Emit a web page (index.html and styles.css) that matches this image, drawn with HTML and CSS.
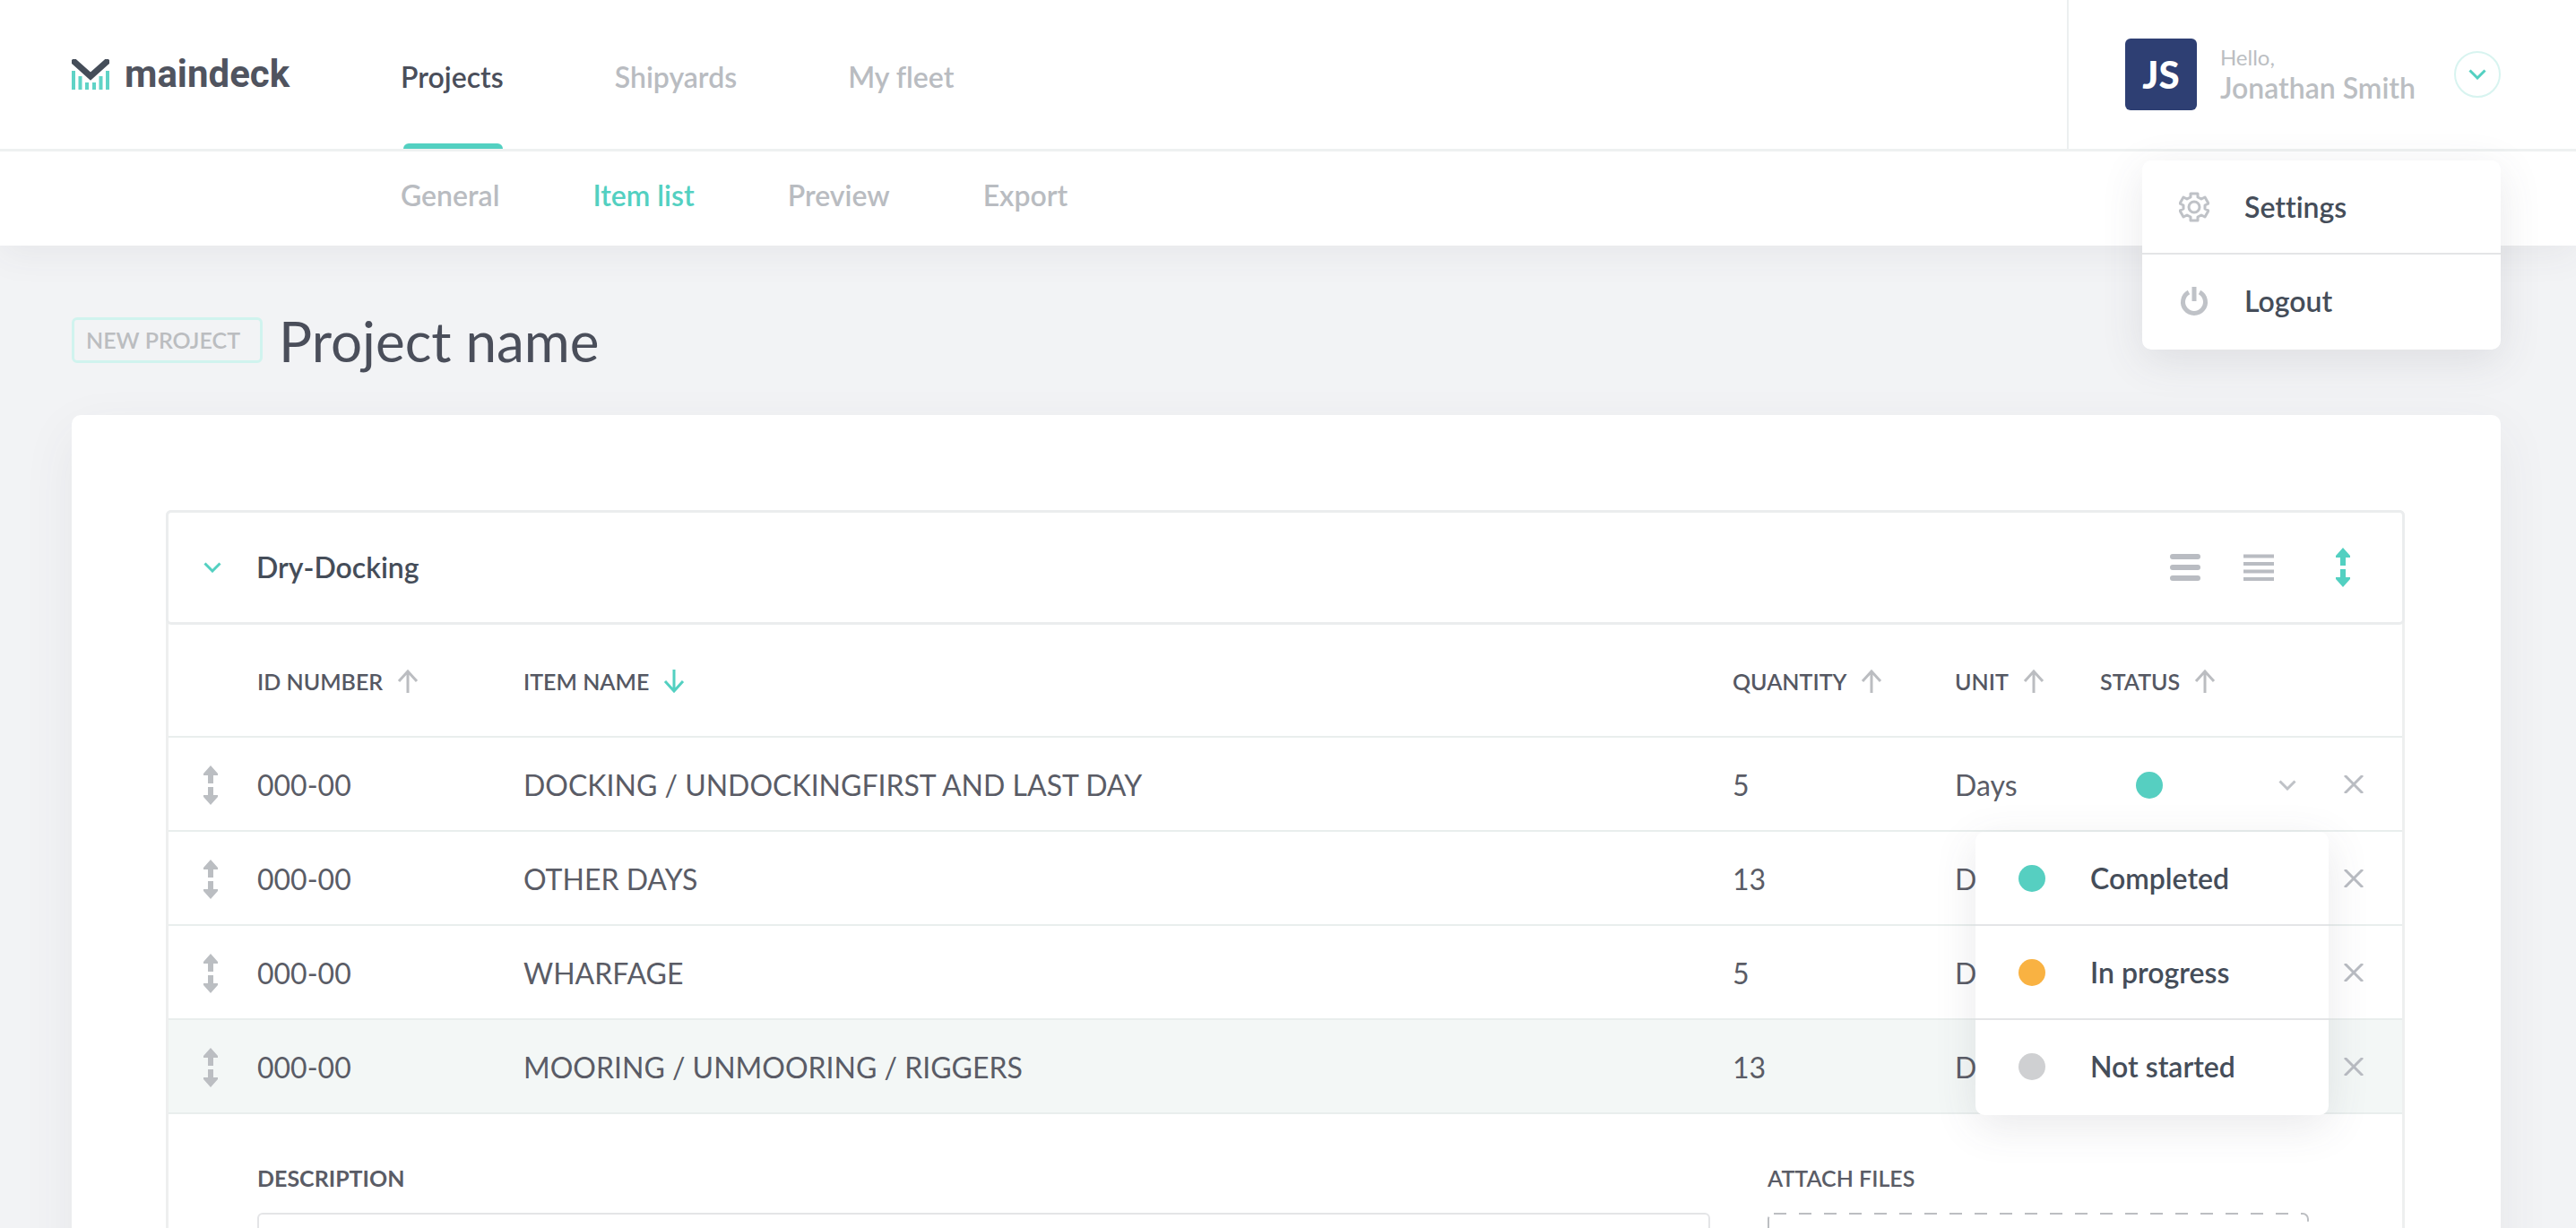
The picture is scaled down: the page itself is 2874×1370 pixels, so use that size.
FILE: index.html
```html
<!DOCTYPE html>
<html lang="en">
<head>
<meta charset="utf-8">
<title>Maindeck – Item list</title>
<link rel="stylesheet" href="styles.css">
</head>
<body>
<svg class="sprite" aria-hidden="true">
  <symbol id="chevron" viewBox="0 0 20 12"><path d="M1.500 1.500 10 10l8.500-8.500" fill="none" stroke="currentColor" stroke-width="3"/></symbol>
  <symbol id="arrow-up" viewBox="0 0 24 26"><path d="M12 26V2M2 13 12 2l10 11" fill="none" stroke="currentColor" stroke-width="3"/></symbol>
  <symbol id="arrow-down" viewBox="0 0 24 26"><path d="M12 0v24M2 13l10 11 10-11" fill="none" stroke="currentColor" stroke-width="3"/></symbol>
  <symbol id="move" viewBox="0 0 16 44"><path d="M8 0l8 9v2h-5v9H5v-9H0V9zM8 44l8-9v-2h-5v-9H5v9H0v2z" fill="currentColor"/></symbol>
  <symbol id="close" viewBox="0 0 22 20"><path d="M1 0l20 20M21 0 1 20" fill="none" stroke="currentColor" stroke-width="3"/></symbol>
</svg>

<header class="header">
  <div class="topbar">
    <a class="logo" href="#">
      <svg class="logo-mark" viewBox="0 0 42 34" aria-hidden="true">
        <path d="M2 13v21M9.500 19v15M17 26v8M25 26v8M32.500 19v15M40 13v21" stroke="#5fd3c6" stroke-width="4" fill="none"/>
        <path d="M3 3 21 19 39 3" fill="none" stroke="#454d59" stroke-width="7" stroke-linecap="round"/>
      </svg>
      <span>maindeck</span>
    </a>
    <nav class="nav" aria-label="Main">
      <a class="nav-link active" href="#">Projects</a>
      <a class="nav-link" href="#">Shipyards</a>
      <a class="nav-link" href="#">My fleet</a>
    </nav>
    <div class="user">
      <span class="avatar">JS</span>
      <p class="user-name"><small>Hello,</small>Jonathan Smith</p>
      <button class="user-toggle" type="button" aria-label="Account menu"><svg class="i-chevron"><use href="#chevron"/></svg></button>
      <ul class="menu user-menu">
        <li><a href="#"><svg class="menu-icon" viewBox="0 0 34 34"><g fill="none" stroke="currentColor" stroke-width="3"><path d="M13 2h8v4l4 2 4-2 4 7-4 2v4l4 2-4 7-4-2-4 2v4h-8v-4l-4-2-4 2-4-7 4-2v-4l-4-2 4-7 4 2 4-2z" stroke-linejoin="round"/><circle cx="17" cy="17" r="6"/></g></svg>Settings</a></li>
        <li><a href="#"><svg class="menu-icon" viewBox="0 0 34 34"><path d="M11 7a12.500 12.500 0 1 0 12 0M17 1v16" fill="none" stroke="currentColor" stroke-width="5"/></svg>Logout</a></li>
      </ul>
    </div>
  </div>
  <nav class="subnav" aria-label="Project">
    <a href="#">General</a>
    <a class="active" href="#">Item list</a>
    <a href="#">Preview</a>
    <a href="#">Export</a>
  </nav>
</header>

<main class="page">
  <div class="title">
    <span class="badge">NEW PROJECT</span>
    <h1>Project name</h1>
  </div>
  <section class="card">
    <div class="group">
      <div class="group-head">
        <button type="button" class="icon-btn teal" aria-label="Collapse"><svg class="i-chevron"><use href="#chevron"/></svg></button>
        <h2>Dry-Docking</h2>
        <button type="button" class="icon-btn" aria-label="Comfortable rows"><svg class="i-lines" viewBox="0 0 34 30"><path d="M3 3h28M3 15h28M3 27h28" stroke="currentColor" stroke-width="6" stroke-linecap="round"/></svg></button>
        <button type="button" class="icon-btn" aria-label="Compact rows"><svg class="i-lines" viewBox="0 0 34 30"><path d="M0 2.500h34M0 11h34M0 19.500h34M0 28h34" stroke="currentColor" stroke-width="4"/></svg></button>
        <button type="button" class="icon-btn teal sort-toggle" aria-label="Reorder"><svg class="i-move"><use href="#move"/></svg></button>
      </div>
      <table class="items">
        <colgroup><col class="c-move"><col class="c-id"><col><col class="c-qty"><col class="c-unit"><col class="c-status"><col class="c-close"></colgroup>
        <thead>
          <tr>
            <td></td>
            <th scope="col"><button type="button">ID NUMBER<svg><use href="#arrow-up"/></svg></button></th>
            <th scope="col"><button type="button" class="sorted">ITEM NAME<svg><use href="#arrow-down"/></svg></button></th>
            <th scope="col"><button type="button">QUANTITY<svg><use href="#arrow-up"/></svg></button></th>
            <th scope="col"><button type="button">UNIT<svg><use href="#arrow-up"/></svg></button></th>
            <th scope="col"><button type="button">STATUS<svg><use href="#arrow-up"/></svg></button></th>
            <td></td>
          </tr>
        </thead>
        <tbody>
          <tr>
            <td class="move"><svg class="i-move"><use href="#move"/></svg></td>
            <td>000-00</td><td>DOCKING / UNDOCKINGFIRST AND LAST DAY</td><td>5</td><td>Days</td>
            <td class="status">
              <button type="button" class="status-toggle" aria-label="Status: Completed"><span class="dot done"></span><svg class="i-chevron"><use href="#chevron"/></svg></button>
              <ul class="menu status-menu">
                <li><a href="#"><span class="dot done"></span>Completed</a></li>
                <li><a href="#"><span class="dot progress"></span>In progress</a></li>
                <li><a href="#"><span class="dot idle"></span>Not started</a></li>
              </ul>
            </td>
            <td class="remove"><button type="button" class="icon-btn" aria-label="Remove"><svg class="i-close"><use href="#close"/></svg></button></td>
          </tr>
          <tr>
            <td class="move"><svg class="i-move"><use href="#move"/></svg></td>
            <td>000-00</td><td>OTHER DAYS</td><td>13</td><td>Days</td><td></td>
            <td class="remove"><button type="button" class="icon-btn" aria-label="Remove"><svg class="i-close"><use href="#close"/></svg></button></td>
          </tr>
          <tr>
            <td class="move"><svg class="i-move"><use href="#move"/></svg></td>
            <td>000-00</td><td>WHARFAGE</td><td>5</td><td>Days</td><td></td>
            <td class="remove"><button type="button" class="icon-btn" aria-label="Remove"><svg class="i-close"><use href="#close"/></svg></button></td>
          </tr>
          <tr class="selected">
            <td class="move"><svg class="i-move"><use href="#move"/></svg></td>
            <td>000-00</td><td>MOORING / UNMOORING / RIGGERS</td><td>13</td><td>Days</td><td></td>
            <td class="remove"><button type="button" class="icon-btn" aria-label="Remove"><svg class="i-close"><use href="#close"/></svg></button></td>
          </tr>
        </tbody>
      </table>
      <div class="details">
        <div class="field">
          <label class="strong" for="description">DESCRIPTION</label>
          <textarea id="description"></textarea>
        </div>
        <div class="field">
          <label for="files">ATTACH FILES</label>
          <div class="drop">
            <svg aria-hidden="true"><rect x="1" y="1" width="100%" height="100%" rx="6"/></svg>
            <input id="files" type="file">
          </div>
        </div>
      </div>
    </div>
  </section>
</main>
</body>
</html>
```
FILE: styles.css
```css
* { box-sizing: border-box; }

html { scrollbar-width: none; }

body {
  margin: 0;
  background: #f2f3f5;
  color: #5a5c66;
  font: 400 32px/40px Lato, "Open Sans", sans-serif;
  font-variant-ligatures: none;
}

a { color: inherit; text-decoration: none; }
button { padding: 0; border: 0; background: none; color: inherit; font: inherit; cursor: pointer; }
ul, p, h1, h2 { margin: 0; padding: 0; list-style: none; }
svg { display: block; }
.sprite { position: absolute; width: 0; height: 0; }

.i-chevron { width: 20px; height: 12px; }
.i-move { width: 16px; height: 44px; }
.i-lines { width: 34px; height: 30px; }
.i-close { width: 22px; height: 20px; }

/* Header */
.header {
  position: relative;
  z-index: 2;
  background: #fff;
  box-shadow: 0 8px 40px rgba(70, 77, 89, 0.07);
}
.topbar {
  display: flex;
  height: 169px;
  padding: 0 84px 0 80px;
  border-bottom: 3px solid #eef1f1;
}
.logo {
  display: flex;
  align-items: center;
  gap: 17px;
  width: 367px;
  color: #50545f;
  font: 700 42px/48px Roboto, sans-serif;
}
.logo-mark { width: 42px; height: 34px; }
.nav { display: flex; gap: 124px; font-weight: 600; }
.nav-link {
  position: relative;
  display: flex;
  align-items: center;
  padding-top: 6px;
  color: #b9bcc1;
}
.nav-link.active { color: #4a4e5a; }
.nav-link.active::after {
  content: "";
  position: absolute;
  right: 1px;
  bottom: 0;
  left: 3px;
  height: 6px;
  border-radius: 6px 6px 0 0;
  background: #53d0c1;
}
.user {
  position: relative;
  display: flex;
  align-items: center;
  margin-left: auto;
  padding-left: 63px;
  border-left: 2px solid #eceff0;
}
.avatar {
  width: 80px;
  margin-right: 26px;
  border-radius: 6px;
  background: #2e3f73;
  color: #fff;
  font-size: 42px;
  font-weight: 900;
  line-height: 80px;
  text-align: center;
}
.user-name { padding-bottom: 2px; color: #bbbec2; font-weight: 600; line-height: 36px; }
.user-name small { display: block; font-size: 24px; font-weight: 400; line-height: 32px; }
.user-toggle {
  display: grid;
  place-items: center;
  width: 52px;
  height: 52px;
  margin-left: 43px;
  border: 2px solid #d8f4f0;
  border-radius: 50%;
  color: #53d0c1;
}
.subnav {
  display: flex;
  gap: 104px;
  height: 105px;
  padding: 0 447px 8px;
  align-items: center;
  color: #b9bcc1;
  font-weight: 600;
}
.subnav .active { color: #53d0c1; }

/* Floating menus */
.menu {
  position: absolute;
  border-radius: 10px;
  background: #fff;
  box-shadow: 0 12px 48px rgba(70, 77, 89, 0.12);
  color: #454d59;
  font-weight: 600;
}
.menu li + li { border-top: 2px solid #e4e5e7; }
.menu li:last-child { padding-bottom: 3px; }
.menu a { display: flex; align-items: center; height: 103px; }
.user-menu { top: 179px; right: 0; width: 400px; }
.user-menu a { gap: 39px; padding-left: 41px; }
.menu-icon { width: 34px; height: 34px; color: #bfc2c7; }
.status-menu { top: 105px; left: -139px; width: 394px; }
.status-menu a { gap: 50px; padding-left: 48px; }

/* Page */
.page { padding: 48px 84px 0 80px; }
.title { display: flex; align-items: center; gap: 18px; height: 115px; margin-bottom: 26px; }
.badge {
  padding: 0 22px 0 13px;
  border: 3px solid #d0f3ee;
  border-radius: 6px;
  color: #bbbdc0;
  font-size: 25px;
  font-weight: 600;
  line-height: 45px;
}
h1 { color: #4a4e5a; font-size: 62px; font-weight: 400; line-height: 72px; }
.card {
  padding: 106px 107px 80px 105px;
  border-radius: 10px;
  background: #fff;
  box-shadow: 0 20px 60px rgba(70, 77, 89, 0.07);
}
.group { border: 3px solid #eeefef; border-top: 0; border-radius: 6px; }
.group-head {
  display: flex;
  align-items: center;
  height: 128px;
  padding: 0 58px 0 39px;
  margin: 0 -3px;
  border: 3px solid #ebedee;
  border-radius: 6px;
}
.group-head h2 { flex: 1; margin-left: 39px; color: #454d59; font-size: 32px; font-weight: 600; }
.icon-btn { margin-right: 48px; color: #b9bcc2; }
.teal { color: #53d0c1; margin-right: 0; }
.sort-toggle { margin-left: 21px; }

/* Item table */
.items { width: 100%; border-collapse: collapse; table-layout: fixed; }
.c-move { width: 99px; }
.c-id { width: 297px; }
.c-qty { width: 248px; }
.c-unit { width: 162px; }
.c-status { width: 272px; }
.c-close { width: 65px; }
.items td, .items th { height: 105px; padding: 2px 0 0; border-bottom: 2px solid #e9eeed; text-align: left; }
.items thead td, .items thead th { height: 125px; }
.items th button { display: flex; align-items: center; gap: 16px; color: #555863; font-size: 25px; font-weight: 600; }
.items th svg { width: 24px; height: 26px; color: #bbbdc1; }
.items th .sorted svg { color: #53d0c1; }
.items .move { padding-left: 39px; color: #bbbec2; }
.items .remove { padding: 0; }
.remove .icon-btn { display: block; margin: 0; }
.selected { background: #f3f7f6; }
.items .status { position: relative; }
.status-toggle { display: flex; align-items: center; justify-content: space-between; width: 219px; padding-left: 40px; color: #bfc2c7; }
.dot { width: 30px; height: 30px; border-radius: 50%; }
.done { background: #56cfc1; }
.progress { background: #f9b242; }
.idle { background: #cfd0d2; }

/* Item details */
.details { display: grid; grid-template-columns: 1fr 602px; gap: 64px; padding: 51px 106px 60px 99px; }
.field label { display: block; margin-bottom: 19px; font-size: 25px; font-weight: 600; }
.field .strong { font-weight: 700; }
.field textarea { display: block; width: 100%; height: 240px; border: 2px solid #e4e5e7; border-radius: 6px; font: inherit; resize: none; }
.drop svg { width: 100%; height: 240px; overflow: visible; fill: none; stroke: #bcbec2; stroke-width: 2; stroke-dasharray: 14 14; }
.drop input { width: 100%; opacity: 0; }
```
